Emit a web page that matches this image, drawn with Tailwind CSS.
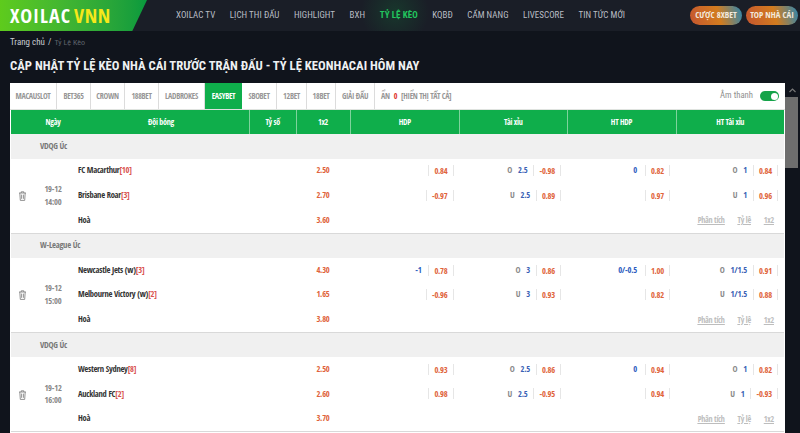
<!DOCTYPE html>
<html lang="vi">
<head>
<meta charset="utf-8">
<title>Tỷ lệ kèo</title>
<script src="https://cdn.jsdelivr.net/npm/@tailwindcss/browser@4"></script>
</head>
<body class="w-[800px] h-[433px] overflow-hidden bg-[#10141c] font-['Roboto_Condensed',sans-serif]">

<!-- Header -->
<header class="flex items-center h-[31px] bg-[#1a1e27] bg-[radial-gradient(circle_at_395px_12px,#155c3466_0,#1a1e2700_34px)]">
    <a class="w-[147px] h-[31px] flex items-center pl-[10px] bg-gradient-to-r from-[#5ecb1c] to-[#079a3d] [clip-path:polygon(0_0,100%_0,90%_100%,0_100%)] font-['Open_Sans_Condensed',sans-serif] font-bold text-[20px] tracking-[1px] leading-none text-white">XOILAC<span class="ml-[3px] tracking-[0.6px] text-[#f6e81a]">VNN</span></a>
    <nav class="flex gap-[14.5px] ml-[29px] text-[9px] tracking-[0.05px] text-[#b9bdc4] whitespace-nowrap">
        <a>XOILAC TV</a>
        <a>LỊCH THI ĐẤU</a>
        <a>HIGHLIGHT</a>
        <a>BXH</a>
        <a class="font-bold text-[#22c55e]">TỶ LỆ KÈO</a>
        <a>KQBĐ</a>
        <a>CẨM NANG</a>
        <a>LIVESCORE</a>
        <a>TIN TỨC MỚI</a>
    </nav>
    <div class="ml-auto mr-[2px] flex gap-[4px] font-['Open_Sans_Condensed',sans-serif] font-bold text-[8.7px] text-[#f3eadf] whitespace-nowrap">
        <a class="w-[52px] h-[19px] flex items-center justify-center rounded-full bg-[linear-gradient(75deg,#c5562f_0%,#d27c1f_55%,#2f87b0_100%)]">CƯỢC 8XBET</a>
        <a class="w-[52px] h-[19px] flex items-center justify-center rounded-full bg-[linear-gradient(75deg,#c5562f_0%,#d27c1f_55%,#2f87b0_100%)]">TOP NHÀ CÁI</a>
    </div>
</header>

<!-- Breadcrumb + title -->
<div class="pl-[10px] pt-[6px] h-[22px] text-[9px] leading-[11px] text-[#c9ccd1]">Trang chủ <span class="mx-[1px]">/</span> <span class="text-[#5f646c] text-[8px]">Tỷ Lệ Kèo</span></div>
<h1 class="pl-[10px] pt-[5px] h-[30px] text-[12.7px] leading-[16px] font-bold text-[#eef0f2] whitespace-nowrap">CẬP NHẬT TỶ LỆ KÈO NHÀ CÁI TRƯỚC TRẬN ĐẤU - TỶ LỆ KEONHACAI HÔM NAY</h1>

<div class="flex">
    <main class="ml-[10px] w-[775px] h-[350px] overflow-hidden bg-white font-['Open_Sans_Condensed',sans-serif] font-bold">
        <!-- Tabs -->
        <div class="flex items-stretch h-[27px] text-[8px] tracking-[-0.3px] text-[#969696] whitespace-nowrap border-b border-[#dfe3df]">
            <a class="w-[47px] flex items-center justify-center border-r border-[#dcdcdc]">MACAUSLOT</a>
            <a class="w-[34px] flex items-center justify-center border-r border-[#dcdcdc]">BET365</a>
            <a class="w-[34px] flex items-center justify-center border-r border-[#dcdcdc]">CROWN</a>
            <a class="w-[34px] flex items-center justify-center border-r border-[#dcdcdc]">188BET</a>
            <a class="w-[46px] flex items-center justify-center border-r border-[#dcdcdc]">LADBROKES</a>
            <a class="w-[37px] flex items-center justify-center bg-[#0fae4b] text-white">EASYBET</a>
            <a class="w-[35px] flex items-center justify-center border-r border-[#dcdcdc]">SBOBET</a>
            <a class="w-[30px] flex items-center justify-center border-r border-[#dcdcdc]">12BET</a>
            <a class="w-[29px] flex items-center justify-center border-r border-[#dcdcdc]">18BET</a>
            <a class="w-[39px] flex items-center justify-center border-r border-[#dcdcdc]">GIẢI ĐẤU</a>
            <span class="flex items-center pl-[6px]">ẨN <b class="mx-[4px] text-[#e0322b]">0</b> [HIỂN THỊ TẤT CẢ]</span>
            <span class="ml-auto flex items-center gap-[7px] pr-[6px] font-['Roboto_Condensed',sans-serif] font-normal text-[8.7px] tracking-normal text-[#8f8f8f]">Âm thanh
                <span class="w-[19px] h-[10px] flex items-center justify-end pr-[1.5px] rounded-full bg-[#16a34a]"><span class="size-[7px] rounded-full bg-white"></span></span>
            </span>
        </div>

        <!-- Odds table -->
        <table class="ml-[1px] w-[773px] table-fixed text-[8.5px] tracking-[-0.25px] text-[#333]">
            <colgroup>
                <col class="w-[22px]"><col class="w-[40px]"><col class="w-[176.5px]"><col class="w-[46.5px]"><col class="w-[54px]"><col class="w-[109.5px]"><col class="w-[107.5px]"><col class="w-[109px]"><col class="w-[108px]">
            </colgroup>
            <thead class="bg-[#0fae4b] text-white text-[8px]">
                <tr class="h-[24px]">
                    <th></th>
                    <th>Ngày</th>
                    <th class="border-r border-[#7ed39c]">Đội bóng</th>
                    <th class="border-r border-[#7ed39c]">Tỷ số</th>
                    <th class="border-r border-[#7ed39c]">1x2</th>
                    <th class="border-r border-[#7ed39c]">HDP</th>
                    <th class="border-r border-[#7ed39c]">Tài xỉu</th>
                    <th class="border-r border-[#7ed39c]">HT HDP</th>
                    <th>HT Tài xỉu</th>
                </tr>
            </thead>
            <tbody>
                <!-- VDQG Úc -->
                <tr class="h-[24.5px] bg-[#f0f0f0]"><td colspan="9" class="pl-[29px] text-[#777]">VDQG Úc</td></tr>
                <tr class="h-[24.6px]">
                    <td rowspan="3" class="border-b-[1.3px] border-[#d9d9d9] text-center"><svg class="inline-block w-[9px] h-[10px] text-[#777]" viewBox="0 0 9 10" fill="none" stroke="currentColor" stroke-width="0.8"><path d="M1 2h7M3.2 2V.8h2.6V2M1.8 2l.5 7.4h4.4L7.2 2M3.6 3.6v4.2M5.4 3.6v4.2"/></svg></td>
                    <td rowspan="3" class="border-b-[1.3px] border-[#d9d9d9] text-center leading-[12.5px] text-[#888]">19-12<br>14:00</td>
                    <td class="pl-[5px]">FC Macarthur<span class="text-[#d9534f]">[10]</span></td>
                    <td></td>
                    <td class="text-center text-[#e0633a]">2.50</td>
                    <td><div class="flex justify-end pr-[6px]"><span class="px-[5px] leading-[11px] border-x border-[#e6e6e6] text-[#e0633a]">0.84</span></div></td>
                    <td><div class="flex justify-end items-center pr-[6px]"><span class="text-[#888]">O</span><span class="ml-[6px] mr-[6px] text-[#3a62b5]">2.5</span><span class="px-[5px] leading-[11px] border-x border-[#e6e6e6] text-[#e0633a]">-0.98</span></div></td>
                    <td><div class="flex justify-end items-center pr-[6px]"><span class="mr-[8px] text-[#2b5cc0]">0</span><span class="px-[5px] leading-[11px] border-x border-[#e6e6e6] text-[#e0633a]">0.82</span></div></td>
                    <td><div class="flex justify-end items-center pr-[6px]"><span class="text-[#888]">O</span><span class="ml-[6px] mr-[6px] text-[#3a62b5]">1</span><span class="px-[5px] leading-[11px] border-x border-[#e6e6e6] text-[#e0633a]">0.84</span></div></td>
                </tr>
                <tr class="h-[24.6px]">
                    <td class="pl-[5px]">Brisbane Roar<span class="text-[#d9534f]">[3]</span></td>
                    <td></td>
                    <td class="text-center text-[#e0633a]">2.70</td>
                    <td><div class="flex justify-end pr-[6px]"><span class="px-[5px] leading-[11px] border-x border-[#e6e6e6] text-[#e0633a]">-0.97</span></div></td>
                    <td><div class="flex justify-end items-center pr-[6px]"><span class="text-[#888]">U</span><span class="ml-[6px] mr-[6px] text-[#3a62b5]">2.5</span><span class="px-[5px] leading-[11px] border-x border-[#e6e6e6] text-[#e0633a]">0.89</span></div></td>
                    <td><div class="flex justify-end pr-[6px]"><span class="px-[5px] leading-[11px] border-x border-[#e6e6e6] text-[#e0633a]">0.97</span></div></td>
                    <td><div class="flex justify-end items-center pr-[6px]"><span class="text-[#888]">U</span><span class="ml-[6px] mr-[6px] text-[#3a62b5]">1</span><span class="px-[5px] leading-[11px] border-x border-[#e6e6e6] text-[#e0633a]">0.96</span></div></td>
                </tr>
                <tr class="h-[25.6px] border-b-[1.3px] border-[#d9d9d9]">
                    <td class="pl-[5px]">Hoà</td>
                    <td></td>
                    <td class="text-center text-[#e0633a]">3.60</td>
                    <td colspan="4"><div class="flex justify-end gap-[13px] pr-[10px] text-[8px] text-[#bdbdbd] underline"><a>Phân tích</a><a>Tỷ lệ</a><a>1x2</a></div></td>
                </tr>

                <!-- W-League Úc -->
                <tr class="h-[24.5px] bg-[#f0f0f0]"><td colspan="9" class="pl-[29px] text-[#777]">W-League Úc</td></tr>
                <tr class="h-[24.6px]">
                    <td rowspan="3" class="border-b-[1.3px] border-[#d9d9d9] text-center"><svg class="inline-block w-[9px] h-[10px] text-[#777]" viewBox="0 0 9 10" fill="none" stroke="currentColor" stroke-width="0.8"><path d="M1 2h7M3.2 2V.8h2.6V2M1.8 2l.5 7.4h4.4L7.2 2M3.6 3.6v4.2M5.4 3.6v4.2"/></svg></td>
                    <td rowspan="3" class="border-b-[1.3px] border-[#d9d9d9] text-center leading-[12.5px] text-[#888]">19-12<br>15:00</td>
                    <td class="pl-[5px]">Newcastle Jets (w)<span class="text-[#d9534f]">[3]</span></td>
                    <td></td>
                    <td class="text-center text-[#e0633a]">4.30</td>
                    <td><div class="flex justify-end items-center pr-[6px]"><span class="mr-[7px] text-[#2b5cc0]">-1</span><span class="px-[5px] leading-[11px] border-x border-[#e6e6e6] text-[#e0633a]">0.78</span></div></td>
                    <td><div class="flex justify-end items-center pr-[6px]"><span class="text-[#888]">O</span><span class="ml-[6px] mr-[6px] text-[#3a62b5]">3</span><span class="px-[5px] leading-[11px] border-x border-[#e6e6e6] text-[#e0633a]">0.86</span></div></td>
                    <td><div class="flex justify-end items-center pr-[6px]"><span class="mr-[8px] text-[#2b5cc0]">0/-0.5</span><span class="px-[5px] leading-[11px] border-x border-[#e6e6e6] text-[#e0633a]">1.00</span></div></td>
                    <td><div class="flex justify-end items-center pr-[6px]"><span class="text-[#888]">O</span><span class="ml-[6px] mr-[6px] text-[#3a62b5]">1/1.5</span><span class="px-[5px] leading-[11px] border-x border-[#e6e6e6] text-[#e0633a]">0.91</span></div></td>
                </tr>
                <tr class="h-[24.6px]">
                    <td class="pl-[5px]">Melbourne Victory (w)<span class="text-[#d9534f]">[2]</span></td>
                    <td></td>
                    <td class="text-center text-[#e0633a]">1.65</td>
                    <td><div class="flex justify-end pr-[6px]"><span class="px-[5px] leading-[11px] border-x border-[#e6e6e6] text-[#e0633a]">-0.96</span></div></td>
                    <td><div class="flex justify-end items-center pr-[6px]"><span class="text-[#888]">U</span><span class="ml-[6px] mr-[6px] text-[#3a62b5]">3</span><span class="px-[5px] leading-[11px] border-x border-[#e6e6e6] text-[#e0633a]">0.93</span></div></td>
                    <td><div class="flex justify-end pr-[6px]"><span class="px-[5px] leading-[11px] border-x border-[#e6e6e6] text-[#e0633a]">0.82</span></div></td>
                    <td><div class="flex justify-end items-center pr-[6px]"><span class="text-[#888]">U</span><span class="ml-[6px] mr-[6px] text-[#3a62b5]">1/1.5</span><span class="px-[5px] leading-[11px] border-x border-[#e6e6e6] text-[#e0633a]">0.88</span></div></td>
                </tr>
                <tr class="h-[25.6px] border-b-[1.3px] border-[#d9d9d9]">
                    <td class="pl-[5px]">Hoà</td>
                    <td></td>
                    <td class="text-center text-[#e0633a]">3.80</td>
                    <td colspan="4"><div class="flex justify-end gap-[13px] pr-[10px] text-[8px] text-[#bdbdbd] underline"><a>Phân tích</a><a>Tỷ lệ</a><a>1x2</a></div></td>
                </tr>

                <!-- VDQG Úc -->
                <tr class="h-[24.5px] bg-[#f0f0f0]"><td colspan="9" class="pl-[29px] text-[#777]">VDQG Úc</td></tr>
                <tr class="h-[24.6px]">
                    <td rowspan="3" class="border-b-[1.3px] border-[#d9d9d9] text-center"><svg class="inline-block w-[9px] h-[10px] text-[#777]" viewBox="0 0 9 10" fill="none" stroke="currentColor" stroke-width="0.8"><path d="M1 2h7M3.2 2V.8h2.6V2M1.8 2l.5 7.4h4.4L7.2 2M3.6 3.6v4.2M5.4 3.6v4.2"/></svg></td>
                    <td rowspan="3" class="border-b-[1.3px] border-[#d9d9d9] text-center leading-[12.5px] text-[#888]">19-12<br>16:00</td>
                    <td class="pl-[5px]">Western Sydney<span class="text-[#d9534f]">[8]</span></td>
                    <td></td>
                    <td class="text-center text-[#e0633a]">2.50</td>
                    <td><div class="flex justify-end pr-[6px]"><span class="px-[5px] leading-[11px] border-x border-[#e6e6e6] text-[#e0633a]">0.93</span></div></td>
                    <td><div class="flex justify-end items-center pr-[6px]"><span class="text-[#888]">O</span><span class="ml-[6px] mr-[6px] text-[#3a62b5]">2.5</span><span class="px-[5px] leading-[11px] border-x border-[#e6e6e6] text-[#e0633a]">0.86</span></div></td>
                    <td><div class="flex justify-end items-center pr-[6px]"><span class="mr-[8px] text-[#2b5cc0]">0</span><span class="px-[5px] leading-[11px] border-x border-[#e6e6e6] text-[#e0633a]">0.94</span></div></td>
                    <td><div class="flex justify-end items-center pr-[6px]"><span class="text-[#888]">O</span><span class="ml-[6px] mr-[6px] text-[#3a62b5]">1</span><span class="px-[5px] leading-[11px] border-x border-[#e6e6e6] text-[#e0633a]">0.82</span></div></td>
                </tr>
                <tr class="h-[24.6px]">
                    <td class="pl-[5px]">Auckland FC<span class="text-[#d9534f]">[2]</span></td>
                    <td></td>
                    <td class="text-center text-[#e0633a]">2.60</td>
                    <td><div class="flex justify-end pr-[6px]"><span class="px-[5px] leading-[11px] border-x border-[#e6e6e6] text-[#e0633a]">0.98</span></div></td>
                    <td><div class="flex justify-end items-center pr-[6px]"><span class="text-[#888]">U</span><span class="ml-[6px] mr-[6px] text-[#3a62b5]">2.5</span><span class="px-[5px] leading-[11px] border-x border-[#e6e6e6] text-[#e0633a]">-0.95</span></div></td>
                    <td><div class="flex justify-end pr-[6px]"><span class="px-[5px] leading-[11px] border-x border-[#e6e6e6] text-[#e0633a]">0.94</span></div></td>
                    <td><div class="flex justify-end items-center pr-[6px]"><span class="text-[#888]">U</span><span class="ml-[6px] mr-[6px] text-[#3a62b5]">1</span><span class="px-[5px] leading-[11px] border-x border-[#e6e6e6] text-[#e0633a]">-0.93</span></div></td>
                </tr>
                <tr class="h-[25.6px] border-b-[1.3px] border-[#d9d9d9]">
                    <td class="pl-[5px]">Hoà</td>
                    <td></td>
                    <td class="text-center text-[#e0633a]">3.70</td>
                    <td colspan="4"><div class="flex justify-end gap-[13px] pr-[10px] text-[8px] text-[#bdbdbd] underline"><a>Phân tích</a><a>Tỷ lệ</a><a>1x2</a></div></td>
                </tr>
            </tbody>
        </table>
    </main>

    <!-- Scrollbar -->
    <aside class="w-[15px]">
        <div class="h-[14px] flex items-center justify-center"><svg class="w-[7px] h-[5px] text-[#777]" viewBox="0 0 7 5" fill="none" stroke="currentColor" stroke-width="1.2"><path d="M.5 4 3.5 1l3 3"/></svg></div>
        <div class="w-[13px] h-[71px] bg-[#6e6e6e]"></div>
    </aside>
</div>
</body>
</html>
